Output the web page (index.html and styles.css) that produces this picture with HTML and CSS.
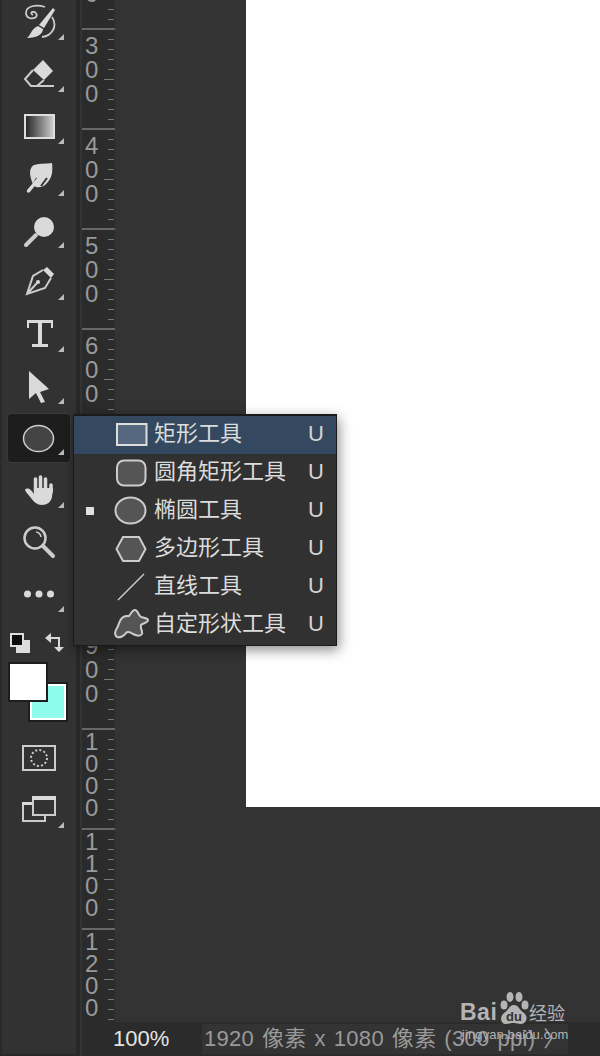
FILE: index.html
```html
<!DOCTYPE html>
<html lang="en">

<head>
    <meta charset="UTF-8">
    <meta name="viewport" content="width=device-width, initial-scale=1.0">
    <title>Shape tools</title>
    <link rel="stylesheet" href="styles.css">
</head>

<body>
    <div class="app">
        <div class="toolbar">
            <div class="tool has-more">
                <svg viewBox="21 4 36 36" width="36" height="36">
                    <path class="fill" d="M53 8 L55 10 L44 28 L39 25 Z"/>
                    <path class="fill" d="M38 26 L43 29 C43 34 37 38 27 38 C31 35 31 29 38 26 Z"/>
                    <path class="line slim2" d="M45 7 C36 4 26 6 26 13 C26 18 32 20 36 17 C38 14 35 11 32 12 C31 13 31 14 33 15"/>
                    <path class="line slim2" d="M52 17 C58 26 52 36 42 37"/>
                </svg>
            </div>
            <div class="tool has-more">
                <svg viewBox="21 57 36 36" width="36" height="36">
                    <path class="fill" d="M43 61 L53 72 L44 81 L33 71 Z"/>
                    <path class="line" d="M33 71 L25 80 L31 87 L54 87 M44 81 L37 87"/>
                </svg>
            </div>
            <div class="tool has-more">
                <svg viewBox="21 107 36 36" width="36" height="36">
                    <defs>
                        <linearGradient id="grad">
                            <stop offset="0" stop-color="#222"/>
                            <stop offset="1" stop-color="#d0d0d0"/>
                        </linearGradient>
                    </defs>
                    <rect x="25" y="114" width="29" height="23" fill="url(#grad)" stroke="#ddd" stroke-width="2"/>
                </svg>
            </div>
            <div class="tool has-more">
                <svg viewBox="21 160 36 36" width="36" height="36">
                    <path class="fill" d="M34 165 C40 163 47 164 52 163 C53 172 52 178 47 183 C44 187 39 188 36 187 L34 186 C31 180 27 169 34 165 Z"/>
                    <path class="slit" d="M32 187 L37 178 M41 186 L47 178"/>
                    <path class="line finger" d="M28.500 191 L40 177"/>
                </svg>
            </div>
            <div class="tool has-more">
                <svg viewBox="21 211 36 36" width="36" height="36">
                    <circle class="fill" cx="44" cy="226" r="10"/>
                    <path class="line thick" d="M36 234 L26 244"/>
                </svg>
            </div>
            <div class="tool has-more">
                <svg viewBox="21 265 36 36" width="36" height="36">
                    <path class="fill" d="M47 268 L54 275 L51 279 L43 271 Z"/>
                    <path class="line" d="M43 271 L33 277 L27 295 L45 289 L51 279 M27 295 L37 284"/>
                    <circle class="fill" cx="38" cy="283" r="2"/>
                </svg>
            </div>
            <div class="tool has-more">
                <svg viewBox="21 317 36 36" width="36" height="36">
                    <path class="fill" d="M27 321 L53 321 L53 329 L51 329 L51 324 L42 324 L42 345 L48 345 L48 348 L32 348 L32 345 L38 345 L38 324 L29 324 L29 329 L27 329 Z"/>
                </svg>
            </div>
            <div class="tool has-more">
                <svg viewBox="21 367 36 36" width="36" height="36">
                    <path class="fill" d="M29 370 L49 388 L40 391 L45 401 L41 402 L36 392 L29 398 Z"/>
                </svg>
            </div>
            <div class="tool tool-active has-more">
                <svg viewBox="21 419 36 36" width="36" height="36">
                    <ellipse cx="38.5" cy="437.5" rx="15" ry="13" fill="#444" stroke="#ccc" stroke-width="1.5"/>
                </svg>
            </div>
            <div class="tool has-more">
                <svg viewBox="21 472 36 36" width="36" height="36">
                    <path class="fill" d="M25 490 C27 487 31 489 34 494 L34 488 L53 488 L52 497 C51 502 47 505 42 505 C37 505 34 502 31 498 C29 495 26 493 25 490 Z"/>
                    <path class="line finger" d="M35.500 492 L35.500 479 M40.500 490 L40.500 477 M45.500 490 L45.500 479 M51 492 L51 485"/>
                </svg>
            </div>
            <div class="tool">
                <svg viewBox="21 524 36 36" width="36" height="36">
                    <circle class="line thin" cx="35" cy="538" r="10.500"/>
                    <path class="line thick" d="M43 546 L53 556"/>
                    <path class="line slim" d="M36 532 C38 532 41 534 41 537"/>
                </svg>
            </div>
            <div class="tool has-more">
                <svg viewBox="21 576 36 36" width="36" height="36">
                    <circle class="fill" cx="27.500" cy="594" r="3.500"/>
                    <circle class="fill" cx="39" cy="594" r="3.500"/>
                    <circle class="fill" cx="50.500" cy="594" r="3.500"/>
                </svg>
            </div>

            <div class="mini-colors">
                <svg viewBox="8 630 60 25" width="60" height="25">
                    <rect x="16" y="640" width="14" height="13" fill="#ddd"/>
                    <rect x="11" y="634" width="12" height="12" fill="#0c0c0c" stroke="#ddd" stroke-width="2"/>
                    <path class="fill" d="M51 633 L51 637 L60 637 L60 647 L64 647 L59 652 L54 647 L58 647 L58 639 L51 639 L51 643 L45 638 Z"/>
                </svg>
            </div>

            <div class="swatches">
                <div class="swatch-bg"></div>
                <div class="swatch-fg"></div>
            </div>

            <div class="tool-small">
                <svg viewBox="21 744 36 28" width="36" height="28">
                    <rect class="line" x="23" y="746" width="32" height="24"/>
                    <circle cx="39" cy="758" r="8" fill="none" stroke="#ccc" stroke-width="2" stroke-dasharray="2 2.200"/>
                </svg>
            </div>
            <div class="tool-small tool-screen has-more">
                <svg viewBox="21 794 36 30" width="36" height="30">
                    <path class="line" d="M32 804 L23 804 L23 821 L45 821 L45 815"/>
                    <rect class="line" x="33" y="798" width="22" height="17"/>
                    <rect class="fill" x="32" y="796" width="24" height="4"/>
                    <rect class="fill" x="22" y="802" width="10" height="3"/>
                </svg>
            </div>
        </div>

        <div class="right">
            <div class="main">
                <div class="ruler">
                    <div class="seg"><span class="seg-label">200</span></div>
                    <div class="seg"><span class="seg-label">300</span></div>
                    <div class="seg"><span class="seg-label">400</span></div>
                    <div class="seg"><span class="seg-label">500</span></div>
                    <div class="seg"><span class="seg-label">600</span></div>
                    <div class="seg"><span class="seg-label">700</span></div>
                    <div class="seg"><span class="seg-label">800</span></div>
                    <div class="seg"><span class="seg-label">900</span></div>
                    <div class="seg seg-long"><span class="seg-label">1000</span></div>
                    <div class="seg seg-long"><span class="seg-label">1100</span></div>
                    <div class="seg seg-long"><span class="seg-label">1200</span></div>
                </div>
                <div class="workspace">
                    <div class="doc"></div>
                </div>
            </div>
            <div class="statusbar">
                <div class="zoom-level">100%</div>
                <div class="doc-info">1920 像素 x 1080 像素 (300 ppi) 〉</div>
            </div>
        </div>

        <div class="menu">
            <div class="menu-row menu-row-on">
                <span class="check"></span>
                <svg viewBox="114 416 36 38" width="36" height="38">
                    <rect x="117" y="424" width="29.500" height="21" fill="#56687f" stroke="#ddd" stroke-width="2"/>
                </svg>
                <span class="menu-text">矩形工具</span><span class="key">U</span>
            </div>
            <div class="menu-row">
                <span class="check"></span>
                <svg viewBox="114 454 36 38" width="36" height="38">
                    <rect class="shape" x="117" y="460.500" width="28.500" height="25" rx="7"/>
                </svg>
                <span class="menu-text">圆角矩形工具</span><span class="key">U</span>
            </div>
            <div class="menu-row">
                <span class="check check-on"></span>
                <svg viewBox="114 492 36 38" width="36" height="38">
                    <ellipse class="shape" cx="130.500" cy="510.500" rx="15" ry="13"/>
                </svg>
                <span class="menu-text">椭圆工具</span><span class="key">U</span>
            </div>
            <div class="menu-row">
                <span class="check"></span>
                <svg viewBox="114 530 36 38" width="36" height="38">
                    <path class="shape" d="M123 537 L139 537 L145.500 549 L139 561 L123 561 L116.500 549 Z"/>
                </svg>
                <span class="menu-text">多边形工具</span><span class="key">U</span>
            </div>
            <div class="menu-row">
                <span class="check"></span>
                <svg viewBox="114 568 36 38" width="36" height="38">
                    <path d="M118 600 L144 574" stroke="#ccc" stroke-width="1.500" fill="none"/>
                </svg>
                <span class="menu-text">直线工具</span><span class="key">U</span>
            </div>
            <div class="menu-row">
                <span class="check"></span>
                <svg viewBox="114 606 36 38" width="36" height="38">
                    <path class="shape" d="M122 618 C125 615 127 616 129 616 C131 614 132 610 135 610 C138 610 138 615 141 617 C144 618 148 618 148 620 C148 623 143 623 141 625 C140 628 143 632 142 634 C140 637 135 635 133 634 C130 632 128 631 126 633 C124 636 120 638 117 637 C114 635 115 631 117 628 C119 625 119 621 122 618 Z"/>
                </svg>
                <span class="menu-text">自定形状工具</span><span class="key">U</span>
            </div>
        </div>

        <div class="watermark">
            <div class="wm-top">
                <span class="wm-bai">Bai</span>
                <svg viewBox="0 0 32 34" width="32" height="34">
                    <ellipse class="wm-paw" cx="7" cy="13" rx="3.500" ry="4.500"/>
                    <ellipse class="wm-paw" cx="13" cy="5" rx="3.500" ry="5"/>
                    <ellipse class="wm-paw" cx="22" cy="5" rx="3.500" ry="5"/>
                    <ellipse class="wm-paw" cx="28" cy="13" rx="3.500" ry="4.500"/>
                    <path class="wm-paw" d="M17 13 C22 13 22 18 27 21 C32 25 29 32 24 32 C21 32 19 31 17 31 C14 31 12 32 9 32 C4 32 2 25 7 21 C12 18 12 13 17 13 Z"/>
                    <text class="wm-du" x="17" y="29" text-anchor="middle">du</text>
                </svg>
                <span class="wm-cn">经验</span>
            </div>
            <div class="wm-url">jingyan.baidu.com</div>
        </div>
    </div>
</body>

</html>
```

FILE: styles.css
```css
body {
    margin: 0;
    background-color: #282828;
    font-family: 'Liberation Sans', 'Noto Sans CJK SC', sans-serif;
}

.app {
    position: relative;
    display: flex;
    width: 600px;
    height: 1056px;
    overflow: hidden;
}

/* left tool strip */
.toolbar {
    box-sizing: border-box;
    width: 76px;
    height: 1054px;
    padding-left: 5px;
    border-left: 2px solid #2a2a2a;
    background-color: #323232;
    flex-shrink: 0;
}

.tool {
    position: relative;
    box-sizing: border-box;
    display: flex;
    align-items: center;
    justify-content: center;
    width: 64px;
    height: 52px;
}

.tool:first-child {
    margin-top: -4px;
}

.tool-active {
    height: 50px;
    margin: 1px 0;
    background-color: #1d1d1d;
    border: 1px solid #3a3a3a;
    border-radius: 4px;
}

.has-more::after {
    content: "";
    position: absolute;
    right: 7px;
    bottom: 8px;
    border-style: solid;
    border-width: 0 0 6px 6px;
    border-color: transparent transparent #bbb transparent;
}

.tool-active.has-more::after {
    right: 6px;
    bottom: 7px;
}

svg {
    display: block;
    flex-shrink: 0;
}

.fill {
    fill: #dadada;
}

.line {
    fill: none;
    stroke: #ccc;
    stroke-width: 2;
}

.thick {
    stroke-width: 4;
    stroke-linecap: round;
}

.thin {
    stroke-width: 2.500;
}

.slim {
    stroke-width: 1.500;
}

.slim2 {
    stroke-width: 1.800;
}

.slit {
    fill: none;
    stroke: #323232;
    stroke-width: 2;
}

.finger {
    stroke: #dadada;
    stroke-width: 3.500;
    stroke-linecap: round;
}

.mini-colors {
    margin: 10px 0 0 1px;
}

.swatches {
    position: relative;
    width: 62px;
    height: 62px;
    margin: 7px 0 0 1px;
}

.swatch-fg,
.swatch-bg {
    position: absolute;
    box-sizing: border-box;
    width: 40px;
    height: 40px;
    border: 2px solid #1e1e1e;
}

.swatch-fg {
    left: 0;
    top: 0;
    background-color: #fff;
}

.swatch-bg {
    left: 20px;
    top: 20px;
    background-color: #8ffbec;
    box-shadow: inset 0 0 0 2px #fff;
}

.tool-small {
    position: relative;
    display: flex;
    justify-content: center;
    width: 64px;
    margin-top: 20px;
}

.tool-screen {
    height: 34px;
    margin-top: 22px;
}

.tool-screen.has-more::after {
    bottom: 0;
}

/* ruler + workspace */
.right {
    flex: 1;
    display: flex;
    flex-direction: column;
    min-width: 0;
    padding-left: 6px;
    background: linear-gradient(to right, #282828 4px, #333 4px);
}

.main {
    display: flex;
    flex: 1;
    min-height: 0;
    overflow: hidden;
}

.ruler {
    box-sizing: border-box;
    width: 33px;
    margin-top: -72px;
    background-color: #2b2b2b;
    flex-shrink: 0;
}

.seg {
    box-sizing: border-box;
    height: 100px;
    padding: 4px 0 0 3px;
    border-top: 2px solid #686868;
    background-image:
        linear-gradient(#777, #777),
        repeating-linear-gradient(to bottom, transparent 0, transparent 9px, #777 9px, #777 10px);
    background-repeat: no-repeat;
    background-position: right 1px top 49px, right 1px top 0;
    background-size: 10px 1px, 6px 98px;
}

.seg-long {
    padding-top: 1px;
}

.seg-label {
    display: block;
    width: 16px;
    font-size: 24px;
    line-height: 24px;
    color: #999;
    word-break: break-all;
}

.seg-long .seg-label {
    line-height: 22px;
}

.workspace {
    flex: 1;
    padding-left: 131px;
    background-color: #333;
}

.doc {
    height: 807px;
    background-color: #fff;
}

.statusbar {
    display: flex;
    height: 34px;
    padding-bottom: 2px;
    box-sizing: border-box;
    align-items: stretch;
    background-color: #2b2b2b;
    margin-left: 0;
}

.zoom-level {
    width: 120px;
    padding-left: 31px;
    box-sizing: border-box;
    padding-top: 2px;
    font-size: 22px;
    line-height: 30px;
    color: #e4e4e4;
}

.doc-info {
    width: 366px;
    margin-top: 2px;
    padding-left: 2px;
    box-sizing: border-box;
    background-color: #333;
    font-size: 22px;
    line-height: 30px;
    letter-spacing: 0.3px;
    word-spacing: 1.5px;
    color: #9a9a9a;
    white-space: nowrap;
    overflow: hidden;
}

/* flyout */
.menu {
    position: absolute;
    left: 73px;
    top: 414px;
    box-sizing: border-box;
    width: 264px;
    height: 232px;
    border: 1px solid #1a1a1a;
    border-top-width: 2px;
    background-color: #313131;
    box-shadow: 2px 4px 12px rgba(0, 0, 0, 0.45);
}

.menu-row {
    display: flex;
    align-items: center;
    height: 38px;
    padding-right: 12px;
}

.menu-row-on {
    background-color: #34495f;
}

.check {
    box-sizing: border-box;
    width: 40px;
    flex-shrink: 0;
}

.check-on::before {
    content: "";
    display: block;
    width: 8px;
    height: 8px;
    margin-left: 12px;
    background-color: #e0e0e0;
}

.menu-text {
    flex: 1;
    margin-left: 4px;
    padding-bottom: 8px;
    font-family: 'Noto Sans CJK SC', sans-serif;
    font-size: 22px;
    line-height: 30px;
    color: #dcdcdc;
    white-space: nowrap;
}

.key {
    padding-bottom: 3px;
    font-size: 22px;
    color: #d4d4d4;
}

.shape {
    fill: #555;
    stroke: #ccc;
    stroke-width: 2;
}

/* watermark */
.watermark {
    position: absolute;
    left: 460px;
    top: 992px;
    width: 108px;
    color: #b4b4b4;
}

.wm-top {
    display: flex;
    align-items: flex-end;
    height: 34px;
}

.wm-bai {
    width: 37px;
    font-size: 23px;
    font-weight: bold;
    line-height: 27px;
    letter-spacing: 0.5px;
}

.wm-paw {
    fill: #b4b4b4;
}

.wm-du {
    font-size: 13px;
    font-weight: bold;
    fill: #333;
}

.wm-cn {
    font-family: 'Noto Sans CJK SC', sans-serif;
    font-size: 18px;
    line-height: 28px;
}

.wm-url {
    margin: 1px 0 0 2px;
    font-size: 13px;
    line-height: 15px;
    letter-spacing: 0.1px;
    white-space: nowrap;
}
```
